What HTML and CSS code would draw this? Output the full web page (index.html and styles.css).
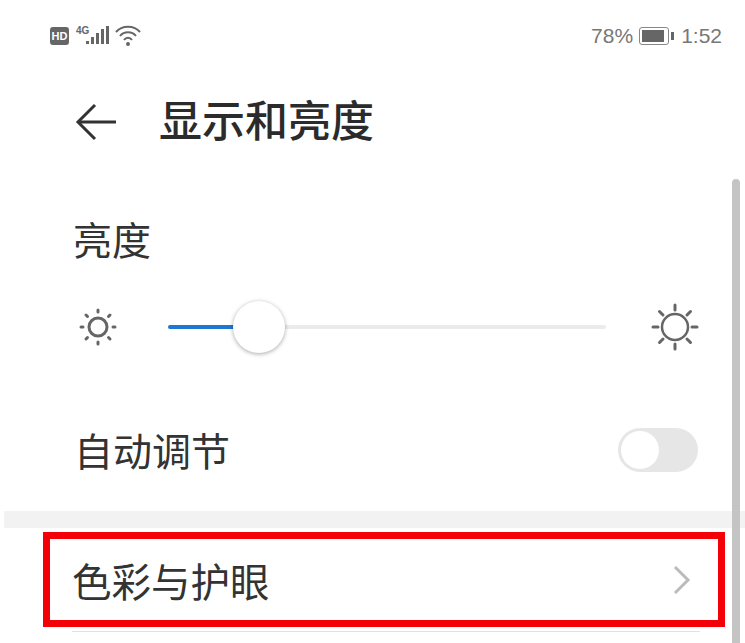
FILE: index.html

```html
<!DOCTYPE html>
<html lang="zh-CN">
<head>
    <meta charset="UTF-8">
    <meta name="viewport" content="width=device-width, initial-scale=1.0">
    <link rel="stylesheet" href="styles.css">
</head>
<body>
    <div class="screen">
        <div class="status-bar">
            <div class="status-left">
                <span class="hd">HD</span>
                <span class="net">4G</span>
                <svg class="signal" width="23" height="20" viewBox="0 0 23 20">
                    <rect x="0" y="15" width="3" height="3" fill="#666"/>
                    <rect x="5" y="11" width="3" height="7" fill="#666"/>
                    <rect x="10" y="7" width="3" height="11" fill="#666"/>
                    <rect x="15" y="3" width="3" height="15" fill="#666"/>
                    <rect x="20" y="0" width="3" height="18" fill="#666"/>
                </svg>
                <svg class="wifi" width="28" height="24" viewBox="0 0 28 24" fill="none" stroke="#666" stroke-width="2">
                    <path d="M1 8C7 1 19 1 25 8"/>
                    <path d="M5 12C9 7 17 7 21 12"/>
                    <path d="M9 16C11 13 15 13 17 16"/>
                    <circle cx="13" cy="20" r="2" fill="#666" stroke="none"/>
                </svg>
            </div>
            <div class="status-right">
                <span>78%</span>
                <span class="battery"><span class="battery-level"></span></span>
                <span class="battery-tip"></span>
                <span class="time">1:52</span>
            </div>
        </div>

        <div class="title-bar">
            <svg class="back" width="42" height="38" viewBox="0 0 42 38" fill="none" stroke="#333" stroke-width="3">
                <path d="M20 2L3 19L20 36"/>
                <path d="M3 19H41"/>
            </svg>
            <h1>显示和亮度</h1>
        </div>

        <div class="brightness">
            <div class="section-label">亮度</div>
            <div class="slider-row">
                <svg class="sun-small" width="38" height="38" viewBox="0 0 38 38" fill="none" stroke="#666" stroke-linecap="round">
                    <circle cx="19" cy="19" r="9" stroke-width="3"/>
                    <path stroke-width="3" d="M19 2V4M19 34V36M2 19H4M34 19H36M7 7L8.500 8.500M29.500 29.500L31 31M7 31L8.500 29.500M29.500 8.500L31 7"/>
                </svg>
                <div class="slider">
                    <div class="slider-fill"></div>
                    <div class="slider-thumb"></div>
                </div>
                <svg class="sun-large" width="48" height="48" viewBox="0 0 48 48" fill="none" stroke="#666" stroke-linecap="round">
                    <circle cx="24" cy="24" r="13" stroke-width="2.500"/>
                    <path stroke-width="3" d="M24 2V7M24 41V46M2 24H7M41 24H46M8.500 8.500L12 12M36 36L39.500 39.500M8.500 39.500L12 36M36 12L39.500 8.500"/>
                </svg>
            </div>
        </div>

        <div class="auto-row">
            <span>自动调节</span>
            <div class="toggle"><div class="toggle-knob"></div></div>
        </div>

        <div class="band"></div>

        <div class="color-row">
            <span>色彩与护眼</span>
            <svg class="chevron" width="18" height="30" viewBox="0 0 18 30" fill="none" stroke="#bbb" stroke-width="3">
                <path d="M2 2L15 15L2 28"/>
            </svg>
        </div>
        <div class="divider"></div>

        <div class="scrollbar"></div>
    </div>
</body>
</html>
```

FILE: styles.css

```css
body {
    margin: 0;
    background-color: #ffffff;
    font-family: "Liberation Sans", "Noto Sans CJK SC", sans-serif;
    color: #333;
}
.screen {
    width: 745px;
    height: 643px;
    position: relative;
    overflow: hidden;
    background-color: #ffffff;
}
.status-bar {
    height: 72px;
    padding: 0 23px 0 50px;
    display: flex;
    align-items: center;
    justify-content: space-between;
    color: #777;
    font-size: 21px;
}
.status-left {
    display: flex;
    align-items: center;
}
.status-left .hd {
    width: 19px;
    height: 18px;
    background-color: #666;
    color: #fff;
    border-radius: 3px;
    font-size: 11px;
    font-weight: bold;
    line-height: 18px;
    text-align: center;
}
.status-left .net {
    margin: -12px 0 0 7px;
    font-size: 10px;
    font-weight: bold;
    color: #666;
}
.status-left .signal {
    margin: 0 6px 0 -3px;
}
.status-right {
    display: flex;
    align-items: center;
}
.battery {
    width: 30px;
    height: 18px;
    margin-left: 6px;
    padding: 2px;
    box-sizing: border-box;
    border: 1px solid #888;
    border-radius: 3px;
}
.battery-level {
    display: block;
    width: 22px;
    height: 100%;
    background-color: #666;
}
.battery-tip {
    width: 3px;
    height: 8px;
    margin: 0 7px 0 2px;
    background-color: #666;
}
.title-bar {
    height: 100px;
    padding-left: 75px;
    display: flex;
    align-items: center;
}
.title-bar h1 {
    margin: 0 0 8px 42px;
    font-size: 43px;
    font-weight: 500;
    color: #2b2b2b;
}
.brightness {
    padding: 46px 46px 0 79px;
}
.section-label {
    margin-left: -6px;
    font-size: 39px;
    line-height: 48px;
}
.slider-row {
    margin-top: 37px;
    display: flex;
    align-items: center;
    gap: 0;
}
.slider {
    width: 438px;
    height: 4px;
    margin: 0 45px 0 51px;
    position: relative;
    border-radius: 2px;
    background-color: #ebebeb;
}
.slider-fill {
    width: 70px;
    height: 100%;
    border-radius: 2px;
    background-color: #1e78d2;
}
.slider-thumb {
    position: absolute;
    left: 65px;
    top: -24px;
    width: 52px;
    height: 52px;
    border-radius: 50%;
    background-color: #ffffff;
    box-shadow: 0 1px 4px rgba(0, 0, 0, 0.35);
}
.auto-row {
    height: 50px;
    margin-top: 74px;
    padding: 0 47px 0 74px;
    display: flex;
    align-items: center;
    justify-content: space-between;
    font-size: 39px;
}
.auto-row span {
    margin-bottom: 2px;
}
.toggle {
    width: 80px;
    height: 44px;
    padding: 3px;
    box-sizing: border-box;
    border-radius: 22px;
    background-color: #e6e6e6;
}
.toggle-knob {
    width: 38px;
    height: 38px;
    border-radius: 50%;
    background-color: #ffffff;
}
.band {
    height: 17px;
    margin: 36px 0 0 4px;
    background-color: #f2f2f2;
}
.color-row {
    height: 81px;
    margin: 4px 20px 0 43px;
    padding: 0 27px 0 22px;
    display: flex;
    align-items: center;
    justify-content: space-between;
    border: 7px solid #f40009;
    font-size: 39.500px;
}
.divider {
    height: 1px;
    margin: 4px 45px 0 72px;
    background-color: #e2e2e2;
}
.scrollbar {
    position: absolute;
    top: 179px;
    right: 5px;
    bottom: 0;
    width: 8px;
    border-radius: 4px 4px 0 0;
    background-color: #c4c4c4;
}
```
